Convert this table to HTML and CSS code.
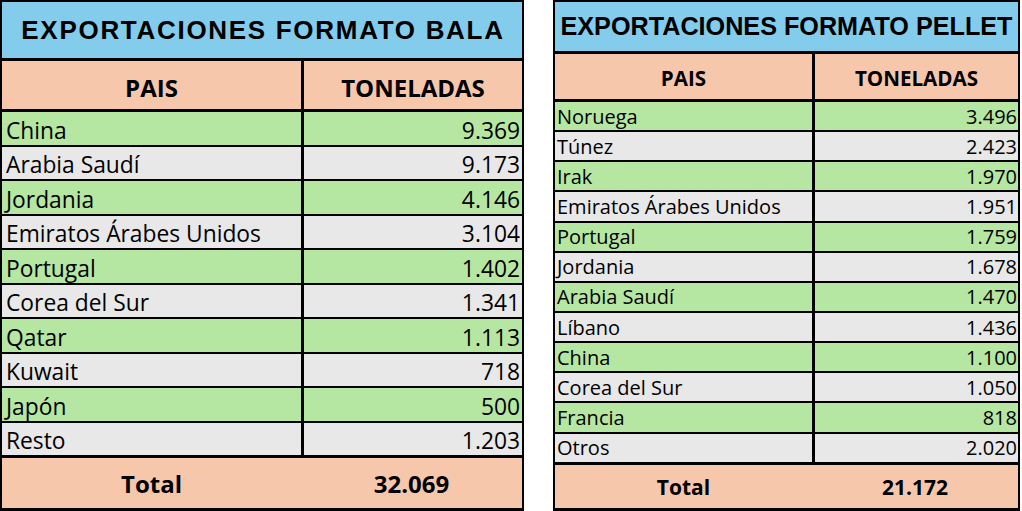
FILE: index.html
```html
<!DOCTYPE html>
<html lang="es">
<head>
<meta charset="utf-8">
<title>Exportaciones</title>
<link rel="stylesheet" href="styles.css">
</head>
<body>
<div class="page">
  <section class="sheet bala">
    <div class="title">EXPORTACIONES FORMATO BALA</div>
    <div class="row head"><div class="c1">PAIS</div><div class="c2">TONELADAS</div></div>
    <div class="row data g"><div class="c1">China</div><div class="c2">9.369</div></div>
    <div class="row data w"><div class="c1">Arabia Saudí</div><div class="c2">9.173</div></div>
    <div class="row data g"><div class="c1">Jordania</div><div class="c2">4.146</div></div>
    <div class="row data w"><div class="c1">Emiratos Árabes Unidos</div><div class="c2">3.104</div></div>
    <div class="row data g"><div class="c1">Portugal</div><div class="c2">1.402</div></div>
    <div class="row data w"><div class="c1">Corea del Sur</div><div class="c2">1.341</div></div>
    <div class="row data g"><div class="c1">Qatar</div><div class="c2">1.113</div></div>
    <div class="row data w"><div class="c1">Kuwait</div><div class="c2">718</div></div>
    <div class="row data g"><div class="c1">Japón</div><div class="c2">500</div></div>
    <div class="row data w last"><div class="c1">Resto</div><div class="c2">1.203</div></div>
    <div class="row total"><div class="c1">Total</div><div class="c2">32.069</div></div>
  </section>
  <section class="sheet pellet">
    <div class="title">EXPORTACIONES FORMATO PELLET</div>
    <div class="row head"><div class="c1">PAIS</div><div class="c2">TONELADAS</div></div>
    <div class="row data g"><div class="c1">Noruega</div><div class="c2">3.496</div></div>
    <div class="row data w"><div class="c1">Túnez</div><div class="c2">2.423</div></div>
    <div class="row data g"><div class="c1">Irak</div><div class="c2">1.970</div></div>
    <div class="row data w"><div class="c1">Emiratos Árabes Unidos</div><div class="c2">1.951</div></div>
    <div class="row data g"><div class="c1">Portugal</div><div class="c2">1.759</div></div>
    <div class="row data w"><div class="c1">Jordania</div><div class="c2">1.678</div></div>
    <div class="row data g"><div class="c1">Arabia Saudí</div><div class="c2">1.470</div></div>
    <div class="row data w"><div class="c1">Líbano</div><div class="c2">1.436</div></div>
    <div class="row data g"><div class="c1">China</div><div class="c2">1.100</div></div>
    <div class="row data w"><div class="c1">Corea del Sur</div><div class="c2">1.050</div></div>
    <div class="row data g"><div class="c1">Francia</div><div class="c2">818</div></div>
    <div class="row data w last"><div class="c1">Otros</div><div class="c2">2.020</div></div>
    <div class="row total"><div class="c1">Total</div><div class="c2">21.172</div></div>
  </section>
</div>
</body>
</html>
```
FILE: styles.css
```css
html, body {
  margin: 0;
  padding: 0;
  background: #ffffff;
}
body {
  font-family: "Open Sans", "Noto Sans", sans-serif;
  color: #000;
}
.page {
  display: flex;
  gap: 29px;
  height: 511px;
}
.sheet {
  box-sizing: border-box;
  height: 511px;
  border: 2px solid #000;
  border-bottom-width: 3px;
  display: flex;
  flex-direction: column;
}
.bala { width: 524px; }
.pellet { width: 467px; }

.title {
  flex: none;
  background: #83cceb;
  border-bottom: 3px solid #000;
  display: flex;
  align-items: center;
  justify-content: center;
  font-family: "Liberation Sans", Arial, sans-serif;
  font-weight: 700;
  line-height: 1;
  white-space: nowrap;
}
.bala .title {
  height: 56px;
  font-size: 26px;
  letter-spacing: 1.7px;
  padding-left: 2px;
}
.pellet .title {
  height: 49px;
  font-size: 25.2px;
}

.row {
  flex: none;
  display: grid;
}
.bala .row { grid-template-columns: 299px 1fr; }
.pellet .row { grid-template-columns: 257px 1fr; }

.row .c1, .row .c2 {
  box-sizing: border-box;
  display: flex;
  line-height: 1;
  white-space: nowrap;
}
.row .c2 { border-left: 3px solid #000; }

.head {
  background: #f7c7ac;
  border-bottom: 3px solid #000;
  font-weight: 700;
}
.head .c1, .head .c2 {
  justify-content: center;
  align-items: center;
}
.bala .head { height: 48px; font-size: 24px; }
.bala .head .c1, .bala .head .c2 { padding-top: 5px; }
.pellet .head { height: 45px; font-size: 20.6px; }
.pellet .head .c1, .pellet .head .c2 { padding-top: 3px; }

.data { border-bottom: 2px solid #000; }
.data.last { border-bottom-width: 3px; }
.data.g { background: #b5e6a2; }
.data.w { background: #e8e8e8; }
.data .c2 { justify-content: flex-end; }

.bala .data {
  height: 32.5px;
  font-size: 22.8px;
}
.bala .data .c1, .bala .data .c2 {
  align-items: flex-end;
  padding-bottom: 2px;
}
.bala .data .c1 { padding-left: 4px; }
.bala .data .c2 { padding-right: 2px; }

.pellet .data {
  height: 28.15px;
  font-size: 20px;
}
.pellet .data .c1, .pellet .data .c2 {
  align-items: center;
  padding-top: 1px;
}
.pellet .data .c1 { padding-left: 2px; }
.pellet .data .c2 { padding-right: 1px; }

.total {
  flex: 1 1 auto;
  background: #f7c7ac;
  font-weight: 700;
}
.total .c1, .total .c2 {
  justify-content: center;
  align-items: center;
  padding-top: 2px;
}
.total .c2 { border-left: 0; }
.bala .total { font-size: 24px; }
.pellet .total { font-size: 21px; }
```
